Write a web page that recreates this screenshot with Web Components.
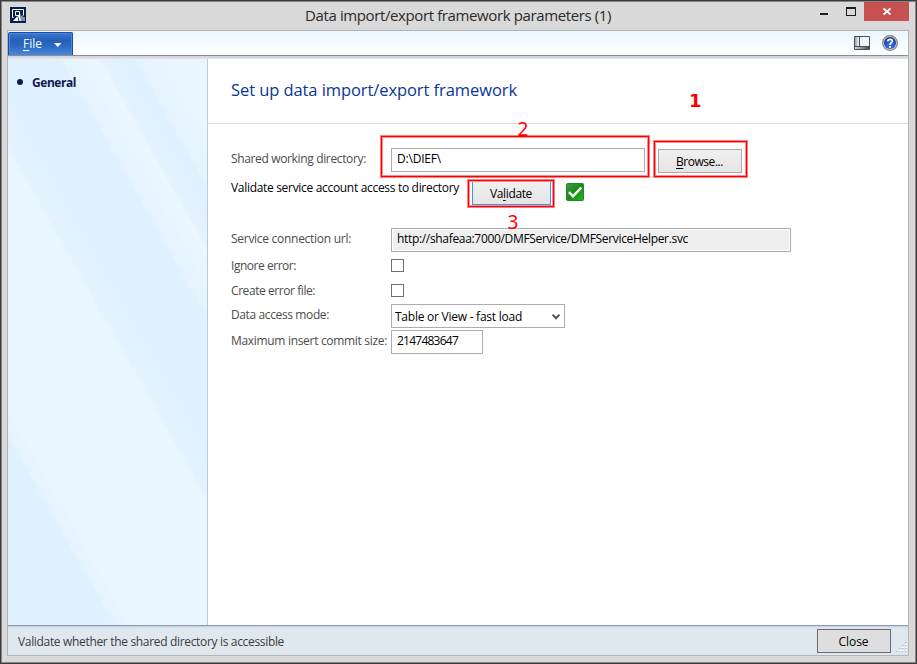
<!DOCTYPE html>
<html lang="en">
<head>
<meta charset="utf-8">
<title>Data import/export framework parameters (1)</title>
<style>
	body {
		margin: 0;
		font: 12px/16px "Open Sans", "Noto Sans", sans-serif;
		color: #1e1e1e;
		overflow: hidden;
	}
</style>
</head>
<body>
<app-window>
	<title-bar slot="title"><fit-text width="306">Data import/export framework parameters (1)</fit-text></title-bar>
	<menu-strip slot="menu"></menu-strip>
	<side-nav slot="nav"><fit-text width="44">General</fit-text></side-nav>
	<params-form slot="content"></params-form>
	<status-bar slot="status">
		<fit-text width="266">Validate whether the shared directory is accessible</fit-text>
		<push-button slot="action" class="close"><fit-text width="30">Close</fit-text></push-button>
	</status-bar>
</app-window>

<script>
// Attaches an open shadow root filled with the class's own markup
class BaseElement extends HTMLElement {
	constructor() {
		super();
		const template = document.createElement('template');
		template.innerHTML = `<style>${this.constructor.css}</style>${this.constructor.markup}`;
		this.attachShadow({ mode: 'open' });
		this.shadowRoot.appendChild(template.content.cloneNode(true));
	}
}

// A single line of text, tracked so that it fills the given width
class FitText extends BaseElement {
	static css = `
	:host {
		display: inline-block;
		white-space: pre;
	}`;
	static markup = `<slot></slot>`;

	connectedCallback() {
		const width = Number(this.getAttribute('width'));
		const count = this.textContent.length;

		this.style.letterSpacing = '0px';
		const natural = this.getBoundingClientRect().width;
		if (width && natural) {
			this.style.letterSpacing = `${((width - natural) / count).toFixed(3)}px`;
		}
	}
}

class AppWindow extends BaseElement {
	static css = `
	:host {
		display: flex;
		box-sizing: border-box;
		width: 917px;
		height: 664px;
		border: 1px solid #3c3a3b;
		background: #d9d9d9;
	}
	.frame {
		flex: 1;
		display: flex;
		flex-direction: column;
		border: 1px solid #858585;
		padding: 0 6px 6px 5px;
	}
	.client {
		flex: 1;
		display: flex;
		flex-direction: column;
		border: 1px solid #b3b6b9;
		background: white;
	}
	.body {
		flex: 1;
		display: grid;
		grid-template-columns: 200px 1fr;
	}`;
	static markup = `
	<div class="frame">
		<slot name="title"></slot>
		<div class="client">
			<slot name="menu"></slot>
			<div class="body">
				<slot name="nav"></slot>
				<slot name="content"></slot>
			</div>
			<slot name="status"></slot>
		</div>
	</div>`;
}

class TitleBar extends BaseElement {
	static css = `
	:host {
		display: grid;
		grid-template-columns: 298px 1fr auto;
		height: 28px;
		font-size: 15px;
		line-height: 26px;
		color: #2b2b2b;
	}
	.logo {
		margin: 5px 0 0 3px;
		display: block;
	}
	.buttons {
		display: flex;
	}
	.buttons svg {
		display: block;
	}`;
	static markup = `
	<svg class="logo" width="16" height="16" viewBox="0 0 16 16">
		<path fill="#04204c" d="M0 0h16v16H0z"/>
		<path fill="none" stroke="#fff" d="M3.500 10.500h-1v-8h11v6M5.500 8.500v-4h4v4z"/>
		<path fill="#fff" d="M3 14l4.500-5 1 5zM8 9l2-4 1 9H9.500zM11.500 9l1-1v6h-1zM13.500 10h1v4h-1z"/>
	</svg>
	<div class="text"><slot></slot></div>
	<div class="buttons">
		<svg width="96" height="20" viewBox="0 0 96 20">
			<path fill="#1e1e1e" d="M7 11h8v2H7zM33 5h10v9H33z"/>
			<path fill="#d9d9d9" d="M34 7h8v6h-8z"/>
			<path fill="#c75050" d="M51 0h45v19H51z"/>
			<path d="M70.500 6.500l7 6M77.500 6.500l-7 6" stroke="#fff" stroke-width="1.800"/>
		</svg>
	</div>`;
}

class MenuStrip extends BaseElement {
	static css = `
	:host {
		display: flex;
		height: 28px;
		box-sizing: border-box;
		background: linear-gradient(#ebf6ff, #fff 24px, #8a8c99 24px, #8a8c99 25px, #cfd1da 25px, #e3e4ea 28px);
	}
	.file {
		box-sizing: border-box;
		width: 65px;
		height: 23px;
		margin-top: 1px;
		border: 1px solid #1c4ba5;
		border-bottom: 0;
		border-radius: 2px 2px 0 0;
		background: linear-gradient(#3b78cf, #2460b8 35%, #2c69c3 60%, #4989dd);
		box-shadow: inset 0 0 0 1px #4b86dc;
		color: white;
		display: flex;
		gap: 12px;
		padding: 3px 0 0 14px;
	}
	.file svg {
		margin-top: 7px;
	}
	u {
		text-underline-offset: 2px;
		text-decoration-thickness: 1px;
	}
	.icons {
		margin: 4px 10px 0 auto;
		display: flex;
		gap: 12px;
	}`;
	static markup = `
	<div class="file">
		<fit-text width="19"><u>F</u>ile</fit-text>
		<svg width="8" height="5" viewBox="0 0 8 5"><path fill="#fff" d="M0 0h7.500L3.750 4z"/></svg>
	</div>
	<div class="icons">
		<svg width="16" height="16" viewBox="0 0 16 16">
			<defs>
				<linearGradient id="pane"><stop stop-color="#9fa3a8"/><stop offset="1" stop-color="#f4f4f4"/></linearGradient>
				<linearGradient id="foot"><stop stop-color="#d5dae2"/><stop offset="1" stop-color="#3d4757"/></linearGradient>
			</defs>
			<path fill="#f3f2f2" stroke="#43505f" d="M.5 1.500h15v13H.5z"/>
			<path fill="url(#pane)" d="M1 2h4v9H1z"/>
			<path fill="url(#foot)" d="M1 12h14v2H1z"/>
			<path stroke="#43505f" d="M5.500 2v9M1 11.500h14"/>
		</svg>
		<svg width="16" height="16" viewBox="0 0 16 16">
			<defs>
				<radialGradient id="ball" cy=".8" r=".8"><stop stop-color="#3a7cf0"/><stop offset="1" stop-color="#16309a"/></radialGradient>
			</defs>
			<circle cx="8" cy="8" r="7.900" fill="#757575"/>
			<circle cx="8" cy="8" r="6.900" fill="#c9c9c9"/>
			<circle cx="8" cy="8" r="6" fill="url(#ball)"/>
			<path fill="none" stroke="#fff" stroke-width="1.800" d="M5.700 6.400C5.900 3.600 10.500 3.700 10.300 6.200 10.200 7.700 8 7.800 8 9.800"/>
			<path fill="#fff" d="M7 10.900h2v1.900H7z"/>
		</svg>
	</div>`;
}

class SideNav extends BaseElement {
	static css = `
	:host {
		display: block;
		position: relative;
		box-sizing: border-box;
		border-right: 1px solid #b9cbe0;
		overflow: hidden;
	}
	.streaks {
		position: absolute;
		inset: 0;
		width: 100%;
		height: 100%;
	}
	.item {
		position: relative;
		display: flex;
		align-items: flex-start;
		gap: 9px;
		padding: 16px 0 0 9px;
		font-weight: bold;
		color: #13194f;
	}
	.item i {
		width: 6px;
		height: 6px;
		margin-top: 4px;
		border-radius: 50%;
		background: #13194f;
	}`;
	static markup = `
	<svg class="streaks">
		<linearGradient id="light" gradientUnits="userSpaceOnUse" x1="-300" y1="0" x2="79" y2="-214">
			<stop offset=".174" stop-color="#dff0ff"/>
			<stop offset=".174" stop-color="#e5f3ff"/>
			<stop offset=".22" stop-color="#eaf6ff"/>
			<stop offset=".5" stop-color="#eaf6ff"/>
			<stop offset=".5" stop-color="#e5f3ff"/>
			<stop offset=".56" stop-color="#dff0ff"/>
			<stop offset=".706" stop-color="#dff0ff"/>
			<stop offset=".706" stop-color="#e5f3ff"/>
			<stop offset=".78" stop-color="#ebf6ff"/>
			<stop offset=".785" stop-color="#e6f3ff"/>
			<stop offset=".83" stop-color="#dff0ff"/>
			<stop offset=".854" stop-color="#dff0ff"/>
			<stop offset=".854" stop-color="#e5f3ff"/>
			<stop offset=".93" stop-color="#eaf6ff"/>
		</linearGradient>
		<rect width="100%" height="100%" fill="url(#light)"/>
	</svg>
	<div class="item"><i></i><slot></slot></div>`;
}

class PushButton extends BaseElement {
	static css = `
	:host {
		display: flex;
		justify-content: center;
		box-sizing: border-box;
		width: 84px;
		height: 24px;
		padding: 4px 1px 0 0;
		border: 1px solid #acacac;
		background: linear-gradient(#f0f0f0, #e5e5e5);
		color: black;
	}
	:host(.focused) {
		width: 79px;
		border-color: #3c94f4;
	}
	:host(.close) {
		width: 74px;
		border-color: #6b6b6b;
		background: #dedede;
	}`;
	static markup = `<slot></slot>`;
}

class TextBox extends BaseElement {
	static css = `
	:host {
		display: block;
		box-sizing: border-box;
		height: 24px;
		padding: 2px 5px;
		border: 1px solid #abadb3;
		background: white;
		color: black;
	}
	:host([readonly]) {
		background: #efefef;
		box-shadow: inset 0 0 0 1px white;
	}`;
	static markup = `<slot></slot>`;
}

class CheckBox extends BaseElement {
	static css = `
	:host {
		display: block;
		box-sizing: border-box;
		width: 13px;
		height: 13px;
		border: 1px solid #707070;
		background: white;
	}`;
	static markup = ``;
}

class DropDown extends BaseElement {
	static css = `
	:host {
		display: flex;
		justify-content: space-between;
		box-sizing: border-box;
		height: 24px;
		padding: 4px 4px 0 3px;
		border: 1px solid #abadb3;
		background: white;
		color: black;
	}
	svg {
		margin-top: 5px;
	}`;
	static markup = `<slot></slot>
	<svg width="8" height="6" viewBox="0 0 8 6"><path fill="none" stroke="#555" stroke-width="2" d="M.6.7L4 4.200 7.400.7"/></svg>`;
}

// Red outline around a control
class MarkBox extends BaseElement {
	static css = `
	:host {
		display: block;
		position: absolute;
		box-sizing: border-box;
		border: 1px solid #ff8080;
		box-shadow: inset 0 0 0 1px #f00, inset 0 0 0 2px #ff8c8c;
	}`;
	static markup = ``;
}

// Step number beside an outline
class MarkNumber extends BaseElement {
	static css = `
	:host {
		display: block;
		position: absolute;
		font: 19px/16px "Noto Sans", sans-serif;
		color: #f00;
	}
	:host([bold]) {
		font: bold 18px/16px "DejaVu Sans", sans-serif;
	}`;
	static markup = `<slot></slot>`;
}

class FormRow extends BaseElement {
	static css = `
	:host {
		display: grid;
		grid-template-columns: var(--label, 160px) 1fr;
		align-items: start;
		justify-items: start;
		color: #4c4c4c;
	}
	.field {
		display: flex;
		align-items: flex-start;
	}`;
	static markup = `
	<slot name="label"></slot>
	<div class="field"><slot></slot></div>`;
}

class ParamsForm extends BaseElement {
	static css = `
	:host {
		display: block;
		position: relative;
	}
	h1 {
		box-sizing: border-box;
		height: 65px;
		margin: 0;
		padding: 19px 0 0 23px;
		border-bottom: 1px solid #dcdcdc;
		font-size: 16.5px;
		line-height: 24px;
		font-weight: normal;
		color: #0a3595;
	}
	.rows {
		padding: 24px 0 0 23px;
	}
	u {
		text-underline-offset: 2px;
		text-decoration-thickness: 1px;
	}
	form-row.path { height: 33px; }
	form-row.path [slot] { margin-top: 3px; }
	form-row.path push-button { margin: 1px 0 0 13px; }
	form-row.check { --label: 241px; height: 47px; color: black; }
	form-row.check [slot] { margin-top: -1px; }
	form-row.check svg { margin: 2px 0 0 15px; }
	form-row.url { height: 31px; }
	form-row.url [slot] { margin-top: 3px; }
	form-row.flag { height: 25px; }
	form-row.flag [slot] { margin-top: -1px; }
	form-row.flag + form-row.mode { margin-top: -5px; }
	form-row.mode { height: 26px; }
	form-row.mode [slot] { margin-top: 3px; }
	form-row.size [slot] { margin-top: 3px; }`;
	static markup = `
	<h1><fit-text width="286">Set up data import/export framework</fit-text></h1>
	<div class="rows">
		<form-row class="path">
			<fit-text slot="label" width="135">Shared working directory:</fit-text>
			<text-box style="width: 254px"><fit-text width="44">D:\\DIEF\\</fit-text></text-box>
			<push-button><fit-text width="47"><u>B</u>rowse...</fit-text></push-button>
		</form-row>
		<form-row class="check">
			<fit-text slot="label" width="228">Validate service account access to directory</fit-text>
			<push-button class="focused"><fit-text width="42">Va<u>l</u>idate</fit-text></push-button>
			<svg width="18" height="18" viewBox="0 0 18 18">
				<defs>
					<linearGradient id="green" x2="1" y2="1"><stop stop-color="#3f9b3f"/><stop offset=".5" stop-color="#1b8a1b"/><stop offset="1" stop-color="#22ba1c"/></linearGradient>
				</defs>
				<rect x=".5" y=".5" width="17" height="17" rx="1" fill="url(#green)" stroke="#26862a"/>
				<path fill="none" stroke="#fff" stroke-width="2.400" d="M3 9.200l4 4.100 8.200-8.600"/>
			</svg>
		</form-row>
		<form-row class="url">
			<fit-text slot="label" width="120">Service connection url:</fit-text>
			<text-box readonly style="width: 400px"><fit-text width="291">http://shafeaa:7000/DMFService/DMFServiceHelper.svc</fit-text></text-box>
		</form-row>
		<form-row class="flag">
			<fit-text slot="label" width="65">Ignore error:</fit-text>
			<check-box></check-box>
		</form-row>
		<form-row class="flag">
			<fit-text slot="label" width="84">Create error file:</fit-text>
			<check-box></check-box>
		</form-row>
		<form-row class="mode">
			<fit-text slot="label" width="98">Data access mode:</fit-text>
			<drop-down style="width: 174px"><fit-text width="127">Table or View - fast load</fit-text></drop-down>
		</form-row>
		<form-row class="size">
			<fit-text slot="label" width="156">Maximum insert commit size:</fit-text>
			<text-box style="width: 92px"><fit-text width="61">2147483647</fit-text></text-box>
		</form-row>
	</div>
	<mark-box style="left: 172px; top: 76px; width: 270px; height: 43px"></mark-box>
	<mark-box style="left: 445px; top: 81px; width: 95px; height: 38px"></mark-box>
	<mark-box style="left: 259px; top: 120px; width: 88px; height: 29px"></mark-box>
	<mark-number bold style="left: 481px; top: 34px">1</mark-number>
	<mark-number style="left: 309.5px; top: 62px">2</mark-number>
	<mark-number style="left: 299.5px; top: 155px">3</mark-number>`;
}

class StatusBar extends BaseElement {
	static css = `
	:host {
		display: flex;
		box-sizing: border-box;
		height: 30px;
		border-top: 1px solid #8e9db2;
		background: linear-gradient(#c6d3e6, #c6d3e6 1px, #d6e0ec 1px, #dfe7ef 3px);
		color: #3b3b3b;
	}
	.text {
		flex: 1;
		padding: 8px 0 0 10px;
	}
	.action {
		margin-top: 3px;
	}
	svg {
		margin: 16px 1px 0 5px;
	}`;
	static markup = `
	<div class="text"><slot></slot></div>
	<div class="action"><slot name="action"></slot></div>
	<svg width="11" height="11" viewBox="0 0 11 11">
		<path fill="#fff" d="M9 1h2v2H9zM9 4h2v2H9zM9 7h2v2H9zM9 10h2v1H9zM6 4h2v2H6zM6 7h2v2H6zM6 10h2v1H6zM3 7h2v2H3zM3 10h2v1H3zM0 10h2v1H0z"/>
		<path fill="#b3bdcf" d="M9 0h1.500v1.500H9zM9 3h1.500v1.500H9zM9 6h1.500v1.500H9zM9 9h1.500v1.500H9zM6 3h1.500v1.500H6zM6 6h1.500v1.500H6zM6 9h1.500v1.500H6zM3 6h1.500v1.500H3zM3 9h1.500v1.500H3zM0 9h1.500v1.500H0z"/>
	</svg>`;
}

customElements.define('app-window', AppWindow);
customElements.define('title-bar', TitleBar);
customElements.define('menu-strip', MenuStrip);
customElements.define('side-nav', SideNav);
customElements.define('push-button', PushButton);
customElements.define('text-box', TextBox);
customElements.define('check-box', CheckBox);
customElements.define('drop-down', DropDown);
customElements.define('mark-box', MarkBox);
customElements.define('mark-number', MarkNumber);
customElements.define('form-row', FormRow);
customElements.define('params-form', ParamsForm);
customElements.define('status-bar', StatusBar);
// Last, so that each text is measured in its finished surroundings
customElements.define('fit-text', FitText);
</script>
</body>
</html>
